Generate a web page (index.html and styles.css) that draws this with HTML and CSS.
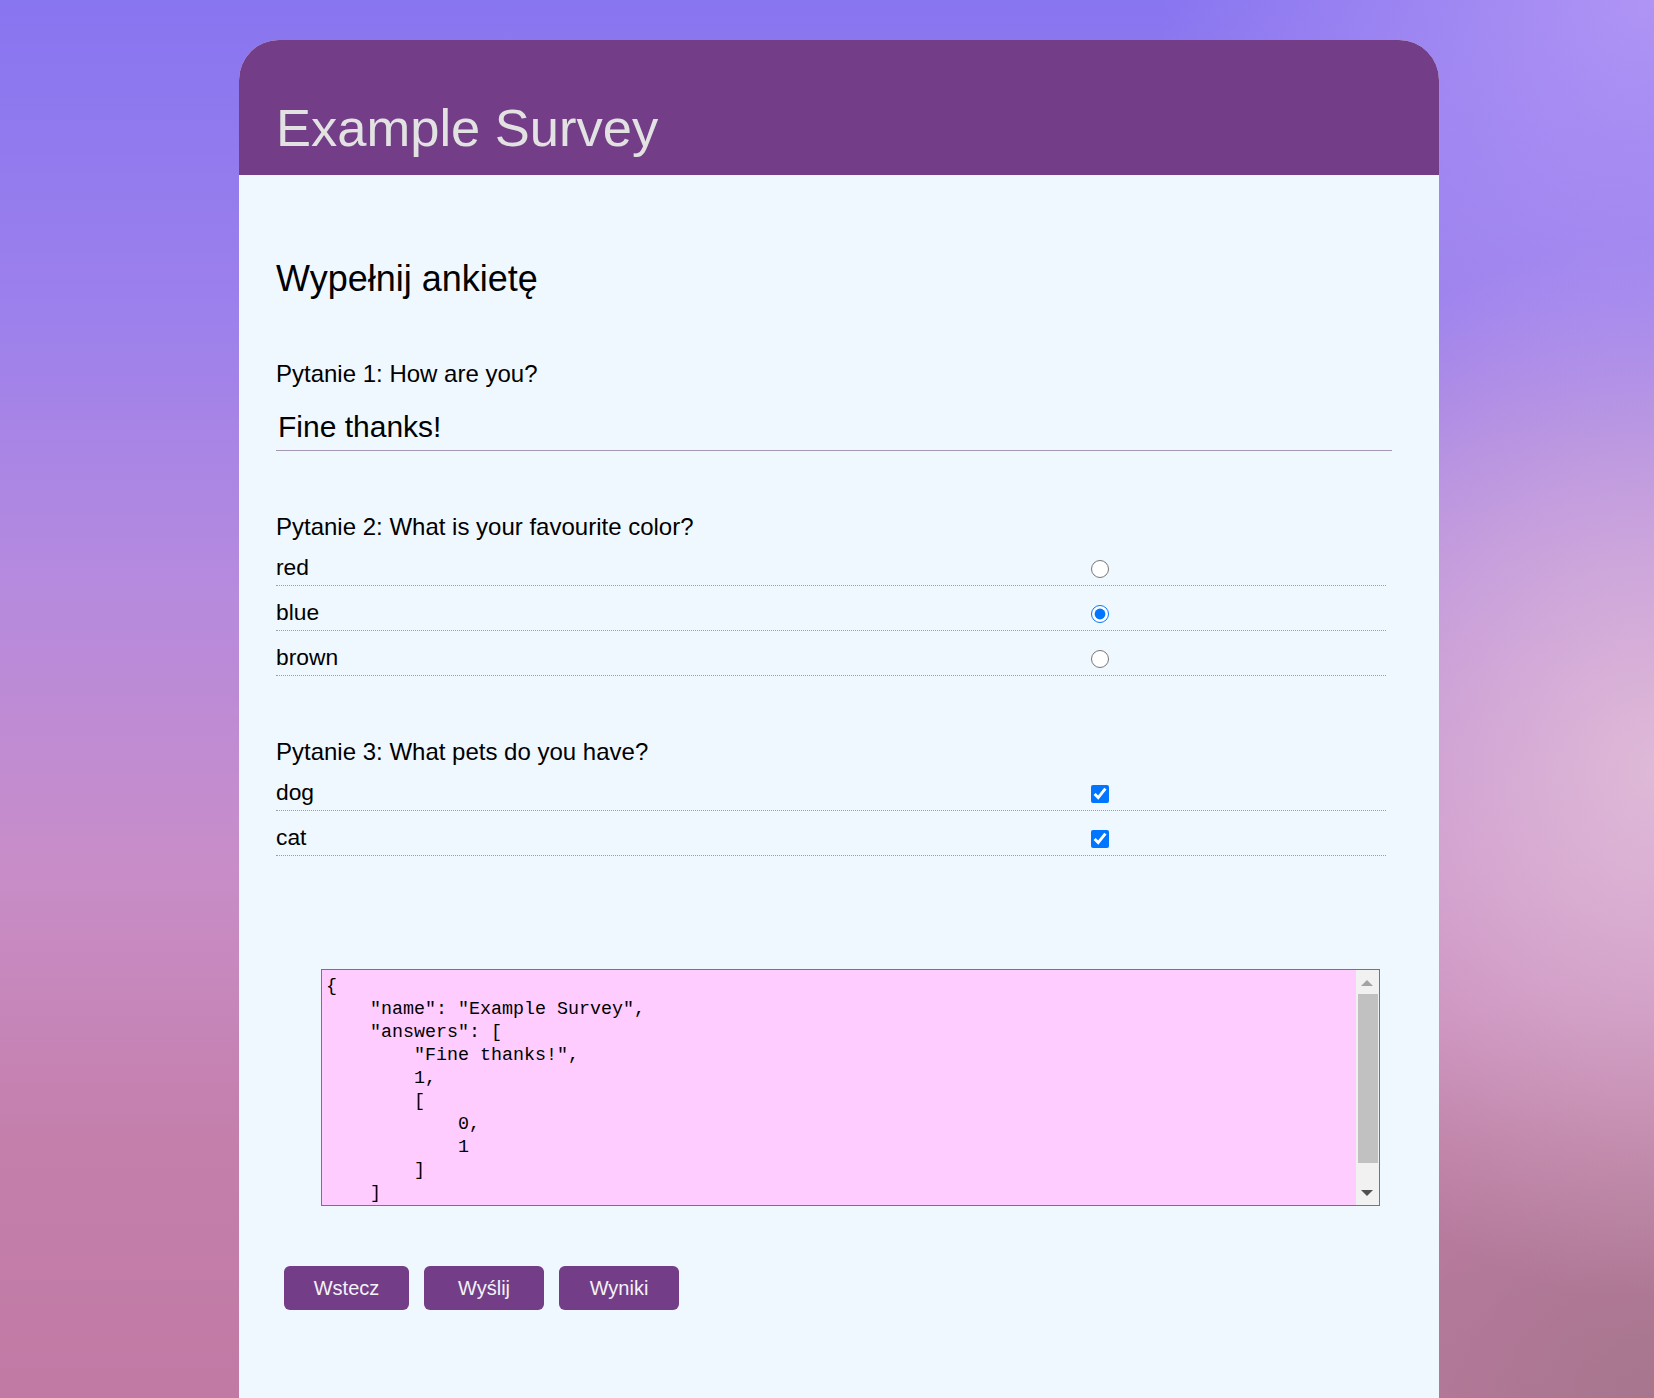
FILE: index.html
```html
<!DOCTYPE html>
<html lang="pl">
<head>
<meta charset="utf-8">
<title>Example Survey</title>
<link rel="stylesheet" href="styles.css">
</head>
<body>
<main class="card">
  <header class="card-head">
    <h1 class="title">Example Survey</h1>
  </header>
  <section class="card-body">
    <h2 class="subtitle">Wypełnij ankietę</h2>

    <div class="question question-first">
      <label class="q-label" for="q1">Pytanie 1: How are you?</label>
      <input id="q1" class="text-answer" type="text" value="Fine thanks!">
    </div>

    <div class="question">
      <div class="q-label">Pytanie 2: What is your favourite color?</div>
      <label class="option"><span class="opt-text">red</span><input class="opt-input" type="radio" name="q2"></label>
      <label class="option"><span class="opt-text">blue</span><input class="opt-input" type="radio" name="q2" checked></label>
      <label class="option"><span class="opt-text">brown</span><input class="opt-input" type="radio" name="q2"></label>
    </div>

    <div class="question">
      <div class="q-label">Pytanie 3: What pets do you have?</div>
      <label class="option"><span class="opt-text">dog</span><input class="opt-input" type="checkbox" checked></label>
      <label class="option"><span class="opt-text">cat</span><input class="opt-input" type="checkbox" checked></label>
    </div>

    <div class="result-box">
      <textarea class="result" readonly>{
    "name": "Example Survey",
    "answers": [
        "Fine thanks!",
        1,
        [
            0,
            1
        ]
    ]
}</textarea>
      <div class="scrollbar" aria-hidden="true">
        <div class="sb-btn"><span class="arrow-up"></span></div>
        <div class="sb-thumb"></div>
        <div class="sb-btn sb-btn-end"><span class="arrow-down"></span></div>
      </div>
    </div>

    <div class="actions">
      <button class="btn btn-wide" type="button">Wstecz</button>
      <button class="btn" type="button">Wyślij</button>
      <button class="btn" type="button">Wyniki</button>
    </div>
  </section>
</main>
</body>
</html>
```
FILE: styles.css
```css
html, body {
  margin: 0;
  height: 100%;
}

body {
  overflow: hidden;
  padding-top: 40px;
  box-sizing: border-box;
  font-family: "Liberation Sans", Arial, sans-serif;
  color: #000;
  background:
    radial-gradient(ellipse 30% 32% at 100% 0%, rgba(180, 152, 245, 0.9), rgba(180, 152, 245, 0) 100%),
    radial-gradient(ellipse 28% 38% at 100% 55%, rgba(226, 190, 216, 0.9), rgba(226, 190, 216, 0) 100%),
    radial-gradient(ellipse 30% 30% at 100% 100%, rgba(165, 118, 140, 0.95), rgba(165, 118, 140, 0) 100%),
    linear-gradient(180deg, #8875f0 0%, #9c80ec 22%, #b68ade 42%, #c88dc8 62%, #c47fab 82%, #c07aa4 100%);
}

.card {
  width: 1200px;
  height: 100%;
  margin-left: 239px;
  background: #f0f8ff;
  border-radius: 40px 40px 0 0;
  overflow: hidden;
}

.card-head {
  background: #733d87;
  padding: 58px 0 17px 37px;
}

.title {
  margin: 0;
  font-size: 52.5px;
  line-height: 60px;
  font-weight: normal;
  color: #e2e2e2;
}

.card-body {
  padding: 0 0 0 37px;
}

.subtitle {
  margin: 84px 0 0;
  font-size: 36px;
  line-height: 40px;
  font-weight: normal;
}

.question {
  margin-top: 62px;
}

.question-first {
  margin-top: 61px;
}

.q-label {
  display: block;
  font-size: 24px;
  line-height: 28px;
}

.text-answer {
  display: block;
  box-sizing: content-box;
  width: 1112px;
  height: 36px;
  margin: 21px 0 0;
  padding: 0 2px 5px;
  border: none;
  border-bottom: 1px solid #a597b6;
  background: transparent;
  font-family: "Liberation Sans", Arial, sans-serif;
  font-size: 30px;
  line-height: 36px;
  color: #000;
  outline: none;
}

.option {
  display: grid;
  grid-template-columns: 815px 18px;
  align-items: center;
  width: 1110px;
  padding: 11px 0 3px;
  border-bottom: 1px dotted #a597b6;
  font-size: 22.8px;
  line-height: 30px;
}

.opt-input {
  width: 18px;
  height: 18px;
  margin: 3px 0 0;
}

.result-box {
  display: flex;
  box-sizing: border-box;
  width: 1059px;
  height: 237px;
  margin: 113px 0 0 45px;
  border: 1px solid #767676;
  background: #ffccff;
}

.result {
  flex: 1;
  min-width: 0;
  margin: 0;
  padding: 5px 0 0 4px;
  border: none;
  background: transparent;
  color: #000;
  font-family: "Liberation Mono", "DejaVu Sans Mono", monospace;
  font-size: 18.33px;
  line-height: 23px;
  resize: none;
  overflow: hidden;
  outline: none;
}

.scrollbar {
  display: flex;
  flex-direction: column;
  width: 23px;
  background: #f1f1f1;
}

.sb-btn {
  display: flex;
  align-items: center;
  justify-content: center;
  height: 25px;
  flex: none;
}

.sb-btn-end {
  margin-top: auto;
}

.arrow-up {
  width: 0;
  height: 0;
  border-left: 6px solid transparent;
  border-right: 6px solid transparent;
  border-bottom: 6px solid #a3a3a3;
  margin-right: 1px;
}

.arrow-down {
  width: 0;
  height: 0;
  border-left: 6px solid transparent;
  border-right: 6px solid transparent;
  border-top: 6px solid #505050;
  margin-right: 1px;
}

.sb-thumb {
  height: 169px;
  margin: -1px 1px 0 2px;
  background: #c1c1c1;
}

.actions {
  display: flex;
  gap: 15px;
  margin: 60px 0 0 8px;
}

.btn {
  min-width: 120px;
  height: 44px;
  padding: 0 20px;
  border: none;
  border-radius: 6px;
  background: #733d87;
  color: #f4f2f8;
  font-family: "Liberation Sans", Arial, sans-serif;
  font-size: 20px;
}

.btn-wide {
  min-width: 125px;
}
```
